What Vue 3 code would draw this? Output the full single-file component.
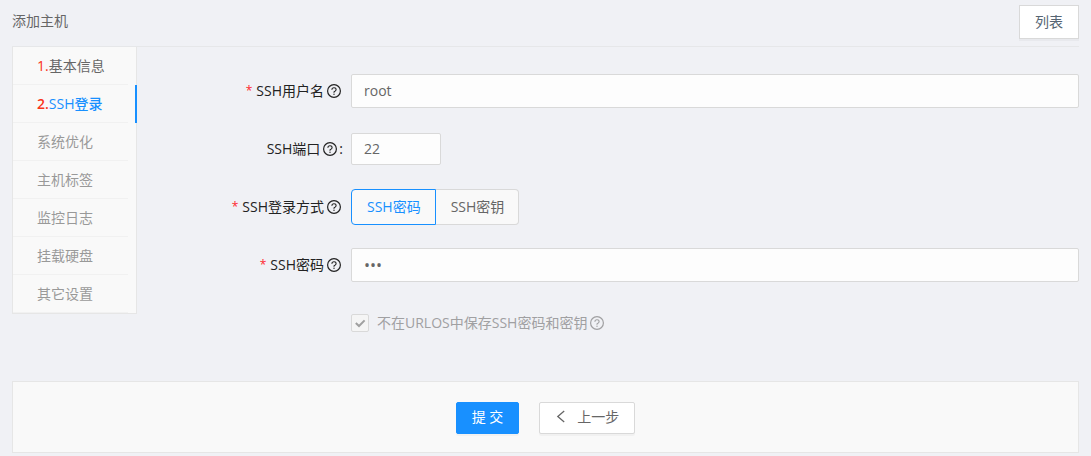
<script setup>
import { h, ref } from 'vue'

const steps = [
  { no: '1.', title: '基本信息', state: 'done' },
  { no: '2.', title: 'SSH登录', state: 'active' },
  { no: '', title: '系统优化', state: 'todo' },
  { no: '', title: '主机标签', state: 'todo' },
  { no: '', title: '监控日志', state: 'todo' },
  { no: '', title: '挂载硬盘', state: 'todo' },
  { no: '', title: '其它设置', state: 'todo' },
]

const username = ref('root')
const port = ref('22')
const method = ref('password')
const password = ref('abc')
const skipSaving = ref(true)

const HelpIcon = () =>
  h('svg', { viewBox: '0 0 14 14', width: 14, height: 14, fill: 'none', stroke: 'currentColor', 'aria-hidden': 'true' }, [
    h('circle', { cx: 7, cy: 7, r: 6.4, 'stroke-width': 1.2 }),
    h('path', { d: 'M4.9 5.7C4.9 4.5 5.8 3.7 7 3.7s2.1.8 2.1 1.9c0 .9-.5 1.4-1.2 1.7-.6.2-.9.5-.9 1v.5', 'stroke-width': 1.1 }),
    h('circle', { cx: 7, cy: 10.2, r: 0.7, fill: 'currentColor', stroke: 'none' }),
  ])
</script>

<template>
  <div class="page">
    <header class="head">
      <h1>添加主机</h1>
      <button type="button" class="btn list-btn">列表</button>
    </header>

    <form @submit.prevent>
      <div class="body">
        <nav class="steps">
          <a v-for="s in steps" :key="s.title" href="#" :class="s.state" @click.prevent>
            <span class="line"><span class="no">{{ s.no }}</span>{{ s.title }}</span>
          </a>
        </nav>

        <div class="fields">
          <div class="row">
            <label class="label" for="username"><span class="star">*</span>SSH用户名<HelpIcon class="help" /></label>
            <input id="username" v-model="username" class="text" type="text" />
          </div>
          <div class="row">
            <label class="label" for="port">SSH端口<HelpIcon class="help" /><span class="colon">:</span></label>
            <input id="port" v-model="port" class="text short" type="text" />
          </div>
          <div class="row" role="radiogroup" aria-labelledby="method-label">
            <span id="method-label" class="label"><span class="star">*</span>SSH登录方式<HelpIcon class="help" /></span>
            <div class="group">
              <label :class="{ on: method === 'password' }"><input v-model="method" type="radio" name="method" value="password" />SSH密码</label>
              <label :class="{ on: method === 'key' }"><input v-model="method" type="radio" name="method" value="key" />SSH密钥</label>
            </div>
          </div>
          <div class="row">
            <label class="label" for="password"><span class="star">*</span>SSH密码<HelpIcon class="help" /></label>
            <input id="password" v-model="password" class="text secret" type="password" />
          </div>
          <div class="row">
            <span class="label"></span>
            <label class="check">
              <span class="box">
                <input v-model="skipSaving" type="checkbox" disabled />
                <svg viewBox="0 0 16 16" width="16" height="16" aria-hidden="true"><path d="M3.8 8l3.2 3 5.6-5.6" /></svg>
              </span>
              不在URLOS中保存SSH密码和密钥<HelpIcon class="help" />
            </label>
          </div>
        </div>
      </div>

      <footer class="foot">
        <button type="submit" class="btn primary">提 交</button>
        <button type="button" class="btn back">
          <svg viewBox="0 0 10 14" width="10" height="14" aria-hidden="true"><path d="M9.2 1L2.8 6.5l6.4 5.5" /></svg>上一步
        </button>
      </footer>
    </form>
  </div>
</template>

<style>
body {
  background: #f0f1f5;
}
</style>

<style scoped>
.page,
.page * {
  box-sizing: border-box;
}
.page {
  padding: 0 12px 3px;
  font: 14px/20px "Open Sans", "Noto Sans CJK SC", sans-serif;
  color: #666;
}
input,
button {
  font: inherit;
  color: inherit;
}
svg {
  flex: none;
}
.head {
  display: flex;
  justify-content: space-between;
  align-items: center;
  height: 47px;
  padding-bottom: 2px;
  border-bottom: 1px solid #e6e7e9;
}
h1 {
  margin: 0;
  padding-bottom: 2px;
  font-size: 14px;
  font-weight: 400;
}
.btn {
  display: flex;
  align-items: center;
  justify-content: center;
  height: 32px;
  padding: 0 15px 2px;
  border: 1px solid #d9d9d9;
  border-radius: 2px;
  background: #fff;
  box-shadow: 0 2px 0 rgba(0, 0, 0, 0.03);
}
.list-btn {
  height: 34px;
  padding-bottom: 0;
  border-radius: 0;
  color: #566573;
}
.body {
  display: flex;
  align-items: flex-start;
}
.steps {
  flex: 0 0 125px;
  border: 1px solid #e6e6e6;
  border-top: 0;
  background: #f9f9f9;
}
.steps a {
  display: block;
  padding-right: 8px;
  color: #999;
  text-decoration: none;
}
.line {
  display: block;
  height: 38px;
  padding-left: 24px;
  border-bottom: 1px solid #f1f1f1;
  line-height: 38px;
}
.steps .done {
  color: #666;
}
.steps .active {
  margin-right: -1px;
  border-right: 2px solid #1890ff;
  padding-right: 7px;
  color: #1890ff;
  font-weight: 500;
}
.no {
  color: #f9341a;
}
.active .no {
  font-weight: 600;
}
.fields {
  flex: 1;
  padding: 15px 0 29px;
}
.row {
  display: flex;
  align-items: center;
  height: 58px;
}
.label {
  display: flex;
  flex: 0 0 214px;
  align-items: center;
  justify-content: flex-end;
  padding-right: 10px;
  color: #222;
}
.star {
  margin-right: 4px;
  color: #ff1f2d;
  font-size: 12px;
}
.help {
  margin-left: 3px;
}
.colon {
  margin: 0 -2px 0 2px;
}
.text {
  flex: 1;
  min-width: 0;
  height: 34px;
  padding: 0 11px 1px 12px;
  border: 1px solid #d9d9d9;
  border-radius: 2px;
  outline: 0;
  background: #fdfdfd;
}
.short {
  flex: 0 0 90px;
  height: 32px;
}
.secret {
  font-size: 16px;
}
.group {
  display: flex;
}
.group label {
  position: relative;
  height: 36px;
  padding: 0 14px 0 15px;
  border: 1px solid #d9d9d9;
  border-left: 0;
  background: #f9f9f9;
  line-height: 34px;
}
.group label:first-child {
  border-left: 1px solid #d9d9d9;
  border-radius: 4px 0 0 4px;
}
.group label:last-child {
  border-radius: 0 4px 4px 0;
}
.group label.on {
  border-color: #1890ff;
  color: #1890ff;
}
.group input {
  position: absolute;
  opacity: 0;
  pointer-events: none;
}
.check {
  display: flex;
  align-items: center;
  color: #a0a0a2;
}
.box {
  display: flex;
  width: 18px;
  height: 18px;
  margin-right: 8px;
  border: 1px solid #d9d9d9;
  border-radius: 2px;
  background: #f5f5f5;
}
.box input {
  position: absolute;
  opacity: 0;
}
.box path {
  fill: none;
  stroke: #a0a0a0;
  stroke-width: 2;
}
.foot {
  display: flex;
  justify-content: center;
  gap: 20px;
  padding: 20px 0 18px;
  border: 1px solid #e6e6e6;
  background: #f9f9f9;
}
.primary {
  border-color: #1890ff;
  background: #1890ff;
  color: #fff;
}
.back {
  gap: 12px;
}
.back path {
  fill: none;
  stroke: #666;
  stroke-width: 1.3;
}
</style>
